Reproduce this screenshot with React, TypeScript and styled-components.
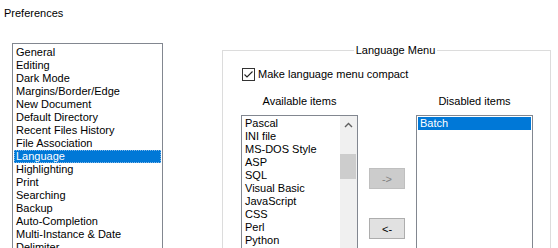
import React from 'react';
import styled, { createGlobalStyle } from 'styled-components';

const GlobalStyle = createGlobalStyle`
  body {
    margin: 0;
    background: #ffffff;
    font-family: 'Liberation Sans', Arial, sans-serif;
    font-size: 11px;
    color: #000000;
    overflow: hidden;
  }
`;

const categories = [
  'General', 'Editing', 'Dark Mode', 'Margins/Border/Edge', 'New Document',
  'Default Directory', 'Recent Files History', 'File Association', 'Language',
  'Highlighting', 'Print', 'Searching', 'Backup', 'Auto-Completion',
  'Multi-Instance & Date', 'Delimiter',
];

const available = [
  'Pascal', 'INI file', 'MS-DOS Style', 'ASP', 'SQL', 'Visual Basic',
  'JavaScript', 'CSS', 'Perl', 'Python',
];

const App = () => (
  <Window>
    <GlobalStyle />
    <Title>Preferences</Title>
    <Body>
      <ListBox $width={151} $height={220} $padTop={2}>
        <Items>
          {categories.map((c) => (
            <Item key={c} $selected={c === 'Language'} $focused={c === 'Language'}>{c}</Item>
          ))}
        </Items>
      </ListBox>

      <Group>
        <Legend>Language Menu</Legend>
        <CheckRow>
          <CheckBox viewBox="0 0 13 13">
            <rect x="0.5" y="0.5" width="12" height="12" fill="#fff" stroke="#333" />
            <path d="M2.5 6.5 L5 9 L10.5 3.5" fill="none" stroke="#222" strokeWidth="1.1" />
          </CheckBox>
          <CheckLabel>Make language menu compact</CheckLabel>
        </CheckRow>

        <Columns>
          <Column>
            <ColumnLabel>Available items</ColumnLabel>
            <ListBox $width={117} $height={140} $padTop={1}>
              <Items>
                {available.map((a) => (
                  <Item key={a}>{a}</Item>
                ))}
              </Items>
              <Scrollbar>
                <ScrollArrow>
                  <svg width="9" height="6" viewBox="0 0 9 6">
                    <path d="M1 5 L4.5 1.5 L8 5" fill="none" stroke="#606060" strokeWidth="1.4" />
                  </svg>
                </ScrollArrow>
                <Thumb />
              </Scrollbar>
            </ListBox>
          </Column>

          <ButtonStack>
            <MoveButton disabled>-&gt;</MoveButton>
            <MoveButton>&lt;-</MoveButton>
          </ButtonStack>

          <Column>
            <ColumnLabel>Disabled items</ColumnLabel>
            <ListBox $width={117} $height={140} $padTop={1}>
              <Items>
                <Item $selected>Batch</Item>
              </Items>
            </ListBox>
          </Column>
        </Columns>
      </Group>
    </Body>
  </Window>
);

const Window = styled.div`
  width: 558px;
  height: 248px;
  overflow: hidden;
`;

const Title = styled.div`
  padding: 7px 0 0 4px;
  line-height: 13px;
`;

const Body = styled.div`
  display: flex;
  align-items: flex-start;
  margin-top: 23px;
  padding-left: 12px;
  gap: 59px;
`;

const ListBox = styled.div<{ $width: number; $height: number; $padTop: number }>`
  box-sizing: border-box;
  display: flex;
  width: ${(p) => p.$width}px;
  height: ${(p) => p.$height}px;
  border: 1px solid #828790;
  background: #ffffff;
  padding: ${(p) => p.$padTop}px 0 0 1px;
  flex-shrink: 0;
`;

const Items = styled.div`
  flex: 1;
  display: flex;
  flex-direction: column;
  padding-right: 1px;
  min-width: 0;
`;

const Item = styled.div<{ $selected?: boolean; $focused?: boolean }>`
  box-sizing: border-box;
  height: 13px;
  line-height: 13px;
  padding-left: 2px;
  white-space: nowrap;
  background: ${(p) => (p.$selected ? '#0078d7' : 'transparent')};
  color: ${(p) => (p.$selected ? '#ffffff' : '#000000')};
  outline: ${(p) => (p.$focused ? '1px dotted #7fb6e8' : 'none')};
  outline-offset: -1px;
`;

const Scrollbar = styled.div`
  width: 17px;
  margin-top: -1px;
  align-self: stretch;
  background: #f0f0f0;
  display: flex;
  flex-direction: column;
`;

const ScrollArrow = styled.div`
  height: 17px;
  display: flex;
  align-items: center;
  justify-content: center;
`;

const Thumb = styled.div`
  margin: 21px 1px 0 0;
  height: 25px;
  background: #cdcdcd;
`;

const Group = styled.fieldset`
  box-sizing: border-box;
  width: 329px;
  height: 240px;
  margin: 1px 0 0;
  padding: 0 0 0 18px;
  border: 1px solid #dcdcdc;
  min-width: 0;
`;

const Legend = styled.legend`
  margin: 0 auto;
  padding: 0 2px;
  line-height: 13px;
`;

const CheckRow = styled.div`
  display: flex;
  align-items: center;
  margin-top: 11px;
  margin-left: 1px;
`;

const CheckBox = styled.svg`
  width: 13px;
  height: 13px;
  flex-shrink: 0;
`;

const CheckLabel = styled.span`
  margin-left: 3px;
  line-height: 13px;
`;

const Columns = styled.div`
  display: flex;
  align-items: flex-start;
  gap: 11px;
  margin-top: 14px;
`;

const Column = styled.div`
  display: flex;
  flex-direction: column;
  align-items: center;
`;

const ColumnLabel = styled.div`
  line-height: 13px;
  margin-bottom: 7px;
`;

const ButtonStack = styled.div`
  display: flex;
  flex-direction: column;
  gap: 29px;
  padding-top: 73px;
`;

const MoveButton = styled.button`
  box-sizing: border-box;
  width: 36px;
  height: 21px;
  padding: 0;
  font-family: inherit;
  font-size: 11px;
  border: 1px solid ${(p) => (p.disabled ? '#bfbfbf' : '#adadad')};
  background: ${(p) => (p.disabled ? '#cccccc' : '#e1e1e1')};
  color: ${(p) => (p.disabled ? '#838383' : '#000000')};
`;

export default App;
